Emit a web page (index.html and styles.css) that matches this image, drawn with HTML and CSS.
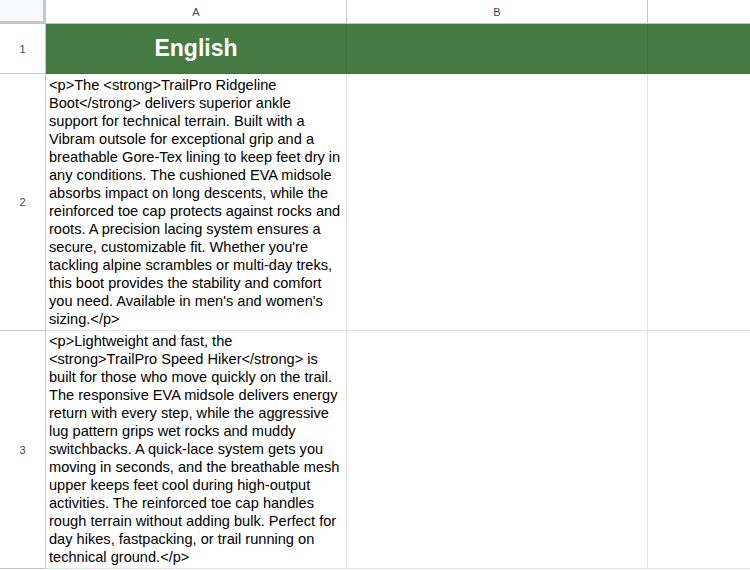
FILE: index.html
```html
<!DOCTYPE html>
<html>
<head>
<meta charset="utf-8">
<link rel="stylesheet" href="styles.css">
</head>
<body>
<div class="sheet">
  <div class="corner"></div>
  <div class="colhead">A</div>
  <div class="colhead">B</div>
  <div class="colhead"></div>

  <div class="rowhead">1</div>
  <div class="cell green title">English</div>
  <div class="cell green"></div>
  <div class="cell green"></div>

  <div class="rowhead">2</div>
  <div class="cell text">&lt;p&gt;The &lt;strong&gt;TrailPro Ridgeline Boot&lt;/strong&gt; delivers superior ankle support for technical terrain. Built with a Vibram outsole for exceptional grip and a breathable Gore-Tex lining to keep feet dry in any conditions. The cushioned EVA midsole absorbs impact on long descents, while the reinforced toe cap protects against rocks and roots. A precision lacing system ensures a secure, customizable fit. Whether you're tackling alpine scrambles or multi-day treks, this boot provides the stability and comfort you need. Available in men's and women's sizing.&lt;/p&gt;</div>
  <div class="cell"></div>
  <div class="cell"></div>

  <div class="rowhead">3</div>
  <div class="cell text">&lt;p&gt;Lightweight and fast, the &lt;strong&gt;TrailPro Speed Hiker&lt;/strong&gt; is built for those who move quickly on the trail. The responsive EVA midsole delivers energy return with every step, while the aggressive lug pattern grips wet rocks and muddy switchbacks. A quick-lace system gets you moving in seconds, and the breathable mesh upper keeps feet cool during high-output activities. The reinforced toe cap handles rough terrain without adding bulk. Perfect for day hikes, fastpacking, or trail running on technical ground.&lt;/p&gt;</div>
  <div class="cell"></div>
  <div class="cell"></div>
</div>
</body>
</html>
```

FILE: styles.css
```css
html, body {
  margin: 0;
  padding: 0;
  background: #ffffff;
}
body {
  font-family: "Liberation Sans", Arial, sans-serif;
  width: 750px;
  height: 570px;
  overflow: hidden;
}
.sheet {
  display: grid;
  grid-template-columns: 46px 301px 301px 103px;
  grid-template-rows: 24px 50px 257px 238px 20px;
}
.corner {
  background: #f8f9fa;
  border-right: 3px solid #c4c7c5;
  border-bottom: 3px solid #c4c7c5;
  box-sizing: border-box;
}
.colhead {
  border-right: 1px solid #c4c7c5;
  border-bottom: 1px solid #c4c7c5;
  box-sizing: border-box;
  display: flex;
  align-items: center;
  justify-content: center;
  font-size: 11px;
  color: #444746;
  padding-top: 1px;
}
.rowhead {
  border-right: 1px solid #c4c7c5;
  border-bottom: 1px solid #c4c7c5;
  box-sizing: border-box;
  display: flex;
  align-items: center;
  justify-content: center;
  font-size: 11px;
  color: #444746;
}
.cell {
  border-right: 1px solid #e1e1e1;
  border-bottom: 1px solid #e1e1e1;
  box-sizing: border-box;
  overflow: hidden;
}
.green {
  background: #467b44;
  border-right-color: #3f6f3d;
  border-bottom-color: #3f6f3d;
}
.title {
  color: #ffffff;
  font-weight: bold;
  font-size: 23px;
  display: flex;
  align-items: center;
  justify-content: center;
}
.text {
  font-size: 14.6px;
  line-height: 18px;
  color: #000000;
  padding: 0 3px 2px 3px;
  display: flex;
  align-items: flex-end;
}
```
